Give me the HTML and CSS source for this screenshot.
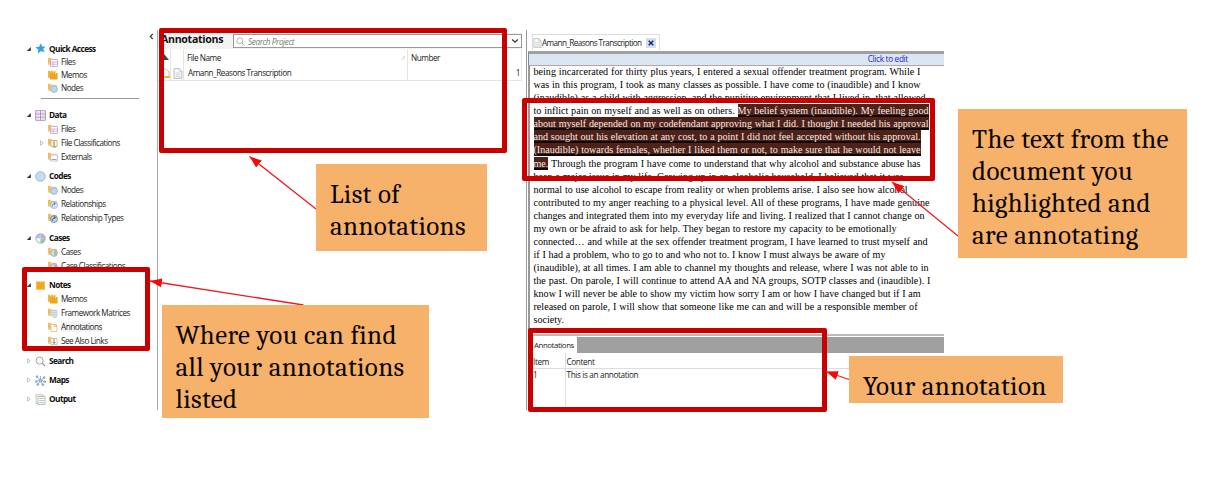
FILE: index.html
```html
<!DOCTYPE html>
<html lang="en">
<head>
<meta charset="utf-8">
<title>Annotations</title>
<link rel="stylesheet" href="styles.css">
</head>
<body>
<svg class="defs" width="0" height="0">
  <defs>
    <symbol id="folder" viewBox="0 0 10 10"><path d="M0 .8h3.2l.8.9h5V8H0z" fill="#f6d795"/><path d="M0 1h2.5v5.5H0z" fill="#efbd5d"/></symbol>
    <symbol id="star" viewBox="0 0 11 11"><path d="M5.8.3l1.5 3.2 3.4-.1-2.5 2.4 1.4 3.8-3.6-1.7-3.2 2.6.5-4L.4 4.3l3.8-.5z" fill="#34a3e6"/></symbol>
    <symbol id="files" viewBox="0 0 10 10"><use href="#folder"/><path d="M2.5 2.5h7v7h-7zM2.5 5h7M2.5 7.2h7M5 5v4.5" fill="#fff" stroke="#c5a3cf" stroke-width=".8"/></symbol>
    <symbol id="memos" viewBox="0 0 10 10"><path d="M0 .8h2v1h1v-1h2v1h1v-1h1.500V8H0z" fill="#efb642"/><path d="M2 3h1v1h1V3h1v1h1V3h1v1h1V3h1.500v6.500H2z" fill="#f0a31c"/></symbol>
    <symbol id="note" viewBox="0 0 11 11"><path d="M1.200 1.200h1.300v.8h1v-.8h1.300v.8h1v-.8h1.300v.8h1v-.8h1.700v8.500H1.200z" fill="#f3ab27"/><path d="M2 4.500h7M2 7h7" stroke="#e29a1d" stroke-width=".5"/></symbol>
    <symbol id="nodes" viewBox="0 0 10 10"><use href="#folder"/><circle cx="6" cy="6" r="3.400" fill="#bdd6ef" stroke="#87a9c9" stroke-width=".7"/></symbol>
    <symbol id="data" viewBox="0 0 11 11"><path d="M.7.700h9.600v9.600H.7zM.7 4h9.600M.7 7.200h9.600M5.500.700v9.600" fill="#fff" stroke="#a882b9" stroke-width=".9"/><path d="M2.500 2.400h1.300M7.200 2.400h1.300M2.500 5.600h1.300M7.200 5.600h1.300M2.500 8.800h1.300M7.200 8.800h1.300" stroke="#a882b9" stroke-width=".6"/></symbol>
    <symbol id="fileclass" viewBox="0 0 10 10"><use href="#folder"/><path d="M3 2.500h2.500v6H3zM6.500 2.500H9v6H6.500z" fill="#fffaf0" stroke="#c5a878" stroke-width=".8"/><path d="M5 9h3" stroke="#8b919b"/></symbol>
    <symbol id="externals" viewBox="0 0 10 10"><use href="#folder"/><path d="M2.500 3h7v6h-7z" fill="#fff" stroke="#c6b0bd" stroke-width=".8"/><path d="M3.500 7.500h5" stroke="#7f9bc0" stroke-width=".9"/></symbol>
    <symbol id="code" viewBox="0 0 11 11"><circle cx="5.500" cy="5.500" r="4.800" fill="#c7dcf2" stroke="#8aaac8" stroke-width=".8"/></symbol>
    <symbol id="rel" viewBox="0 0 10 10"><use href="#folder"/><circle cx="6" cy="6" r="3.500" fill="#d5e5f6" stroke="#7ba0d0" stroke-width=".6"/><path d="M4.500 7.500c0-2 1-3 2.500-3M5.800 3.500L7.500 4.500 6 5.800" fill="none" stroke="#3d72c0" stroke-width=".8"/></symbol>
    <symbol id="reltype" viewBox="0 0 10 10"><use href="#folder"/><circle cx="6" cy="6" r="3.500" fill="#bfd3e7" stroke="#56708d" stroke-width=".7"/><path d="M4.500 7.700c0-2 1-3 2.500-3M5.800 3.500L7.500 4.500 6 5.800" fill="none" stroke="#27486e" stroke-width=".9"/></symbol>
    <symbol id="casehead" viewBox="0 0 11 11"><path d="M5.500 5.500V.7A4.800 4.800 0 0 0 .7 5.500z" fill="#a9cbea"/><path d="M5.500 5.500V.7A4.800 4.800 0 0 1 10.300 5.500z" fill="#cfa6d8"/><path d="M5.500 5.500H.7A4.800 4.800 0 0 0 5.500 10.300z" fill="#f1f3f5"/><path d="M5.500 5.500h4.800A4.800 4.800 0 0 1 5.500 10.300z" fill="#86d28c"/><circle cx="5.500" cy="5.500" r="4.700" fill="none" stroke="#8e9aa9" stroke-width=".7"/></symbol>
    <symbol id="cases" viewBox="0 0 10 10"><use href="#folder"/><circle cx="6" cy="6" r="3.400" fill="#d4dfe9" stroke="#8598a8" stroke-width=".7"/><path d="M6 6h3a3 3 0 0 1-3 3z" fill="#8fd093"/><path d="M6 6V3a3 3 0 0 1 3 3z" fill="#c8a8d2"/></symbol>
    <symbol id="matrix" viewBox="0 0 10 10"><use href="#folder"/><path d="M3 2.500h6v5.500H3zM3 4.300h6M3 6.200h6M5 2.500V8M7 2.500V8" fill="#fff" stroke="#aebdce" stroke-width=".7"/><path d="M5 9.200h4" stroke="#b9c6d6"/></symbol>
    <symbol id="annot" viewBox="0 0 10 10"><use href="#folder"/><path d="M3 2.500h4l2 2V9.500H3z" fill="#fff" stroke="#d8b57c" stroke-width=".7"/><path d="M6.500 2.500v2H9" fill="none" stroke="#d8a94e" stroke-width=".7"/></symbol>
    <symbol id="links" viewBox="0 0 10 10"><use href="#folder"/><path d="M3 2.500h2.500v6H3zM6.500 2.500H9v6H6.500z" fill="#fff" stroke="#b6b3a4" stroke-width=".7"/><path d="M4.500 6.500h3" stroke="#75a2b3"/></symbol>
    <symbol id="search" viewBox="0 0 11 11"><circle cx="4.600" cy="4.600" r="3.600" fill="#fafcfe" stroke="#8b8f96" stroke-width=".8"/><path d="M7.200 7.200l3 3" stroke="#8b8f96" stroke-width="1.100"/></symbol>
    <symbol id="maps" viewBox="0 0 11 11"><path d="M5.500 5.500L2 1.500M5.500 5.500l3.800-3M5.500 5.500L1 6.500M5.500 5.500l4.200 1M5.500 5.500L2.800 9.700M5.500 5.500L7.800 10M5.500 5.500V1" stroke="#8594aa" stroke-width=".7"/><g fill="#a9c8e8" stroke="#64819f" stroke-width=".5"><circle cx="2" cy="1.700" r="1"/><circle cx="9.200" cy="2.500" r="1"/><circle cx="1.200" cy="6.500" r="1"/><circle cx="9.700" cy="6.700" r="1"/><circle cx="2.800" cy="9.500" r="1"/><circle cx="7.800" cy="9.700" r="1"/><circle cx="5.500" cy="5.500" r="1.500"/></g></symbol>
    <symbol id="output" viewBox="0 0 11 11"><path d="M1 .800h7v8.500H1z" fill="#fff" stroke="#a6aaa8" stroke-width=".7"/><path d="M3 2.500h7v8H3z" fill="#fff" stroke="#999f9c" stroke-width=".7"/><path d="M4.300 4.500h4.500M4.300 6.500h4.500M4.300 8.500h4.500" stroke="#92b5a1" stroke-width=".7"/></symbol>
    <symbol id="page" viewBox="0 0 10 11"><path d="M1 .6h5.300L9 3.300v7.100H1z" fill="#f7f9f9" stroke="#a5a9ab" stroke-width=".7"/><path d="M6.200.600v2.800H9M2.500 5h5M2.500 6.800h5M2.500 8.600h5" fill="none" stroke="#b9bdbf" stroke-width=".6"/></symbol>
    <symbol id="open" viewBox="0 0 6 6"><path d="M4.800 1v4H.8z" fill="#333"/></symbol>
    <symbol id="shut" viewBox="0 0 6 6"><path d="M1.500.800L4.300 3 1.500 5.200z" fill="#fff" stroke="#aaa" stroke-width=".7"/></symbol>
  </defs>
</svg>

<main class="stage">
  <div class="app">
    <nav class="sidebar">
      <span class="collapse"><svg viewBox="0 0 5 7"><path d="M3.700 1L1.300 3.500l2.400 2.500" fill="none" stroke="#333" stroke-width="1.100"/></svg></span>
      <section class="group quick">
        <h2><svg class="tri"><use href="#open"/></svg><svg class="hi"><use href="#star"/></svg><span>Quick Access</span></h2>
        <p><svg><use href="#files"/></svg><span>Files</span></p>
        <p><svg><use href="#memos"/></svg><span>Memos</span></p>
        <p><svg><use href="#nodes"/></svg><span>Nodes</span></p>
      </section>
      <hr>
      <section class="group">
        <h2><svg class="tri"><use href="#open"/></svg><svg class="hi"><use href="#data"/></svg><span>Data</span></h2>
        <p><svg><use href="#files"/></svg><span>Files</span></p>
        <p class="nested"><svg class="tri"><use href="#shut"/></svg><svg><use href="#fileclass"/></svg><span>File Classifications</span></p>
        <p><svg><use href="#externals"/></svg><span>Externals</span></p>
      </section>
      <section class="group codes">
        <h2><svg class="tri"><use href="#open"/></svg><svg class="hi"><use href="#code"/></svg><span>Codes</span></h2>
        <p><svg><use href="#nodes"/></svg><span>Nodes</span></p>
        <p><svg><use href="#rel"/></svg><span>Relationships</span></p>
        <p><svg><use href="#reltype"/></svg><span>Relationship Types</span></p>
      </section>
      <section class="group cases">
        <h2><svg class="tri"><use href="#open"/></svg><svg class="hi"><use href="#casehead"/></svg><span>Cases</span></h2>
        <p><svg><use href="#cases"/></svg><span>Cases</span></p>
        <p><svg><use href="#cases"/></svg><span>Case Classifications</span></p>
      </section>
      <section class="group notes">
        <h2><svg class="tri"><use href="#open"/></svg><svg class="hi"><use href="#note"/></svg><span>Notes</span></h2>
        <p><svg><use href="#memos"/></svg><span>Memos</span></p>
        <p><svg><use href="#matrix"/></svg><span>Framework Matrices</span></p>
        <p class="current"><svg><use href="#annot"/></svg><span>Annotations</span></p>
        <p><svg><use href="#links"/></svg><span>See Also Links</span></p>
      </section>
      <section class="group closed">
        <h2><svg class="tri"><use href="#shut"/></svg><svg class="hi"><use href="#search"/></svg><span>Search</span></h2>
        <h2><svg class="tri"><use href="#shut"/></svg><svg class="hi"><use href="#maps"/></svg><span>Maps</span></h2>
        <h2><svg class="tri"><use href="#shut"/></svg><svg class="hi"><use href="#output"/></svg><span>Output</span></h2>
      </section>
    </nav>

    <section class="list">
      <header class="list-head">
        <h1>Annotations</h1>
        <div class="searchbox">
          <svg class="glass"><use href="#search"/></svg><em>Search Project</em>
          <svg class="caret" viewBox="0 0 8 6"><path d="M1.200 1.500L4 4.200l2.800-2.700" fill="none" stroke="#333" stroke-width="1.200"/></svg>
        </div>
      </header>
      <div class="grid">
        <div class="cell"><svg class="pin" viewBox="0 0 8 8"><path d="M3 0l5 6H0z" fill="#444"/></svg></div><div class="cell"></div>
        <div class="cell name">File Name<i>/</i></div><div class="cell num">Number</div>
        <div class="cell"><svg class="mark" viewBox="0 0 8 10"><path d="M0 1h4l3 3v5H0z" fill="#fff" stroke="#c4a58b" stroke-width=".7"/><path d="M0 8h8v2H0z" fill="#f3b145"/></svg></div>
        <div class="cell"><svg class="doc"><use href="#page"/></svg></div>
        <div class="cell name row">Amann_Reasons Transcription</div><div class="cell num end">1</div>
      </div>
    </section>

    <section class="detail">
      <div class="tabs"><div class="tab"><svg><use href="#page"/></svg><span>Amann_Reasons Transcription</span><b><svg viewBox="0 0 10 10"><path d="M2.700 2.700l4.600 4.600M7.300 2.700L2.700 7.300" stroke="#1d2b66" stroke-width="1.500"/></svg></b></div></div>
      <div class="editbar"><span>Click to edit</span></div>
      <article class="doc-text">
        <p>being incarcerated for thirty plus years, I entered a sexual offender treatment program. While I</p>
        <p>was in this program, I took as many classes as possible. I have come to (inaudible) and I know</p>
        <p>(inaudible) as a child with aggression, and the punitive environment that I lived in, that allowed</p>
        <p>to inflict pain on myself and as well as on others. <mark>My belief system (inaudible). My feeling good</mark></p>
        <p><mark>about myself depended on my codefendant approving what I did. I thought I needed his approval</mark></p>
        <p><mark>and sought out his elevation at any cost, to a point I did not feel accepted without his approval.</mark></p>
        <p><mark>(Inaudible) towards females, whether I liked them or not, to make sure that he would not leave</mark></p>
        <p><mark>me.</mark> Through the program I have come to understand that why alcohol and substance abuse has</p>
        <p>been a major issue in my life. Growing up in an alcoholic household, I believed that it was</p>
        <p>normal to use alcohol to escape from reality or when problems arise. I also see how alcohol</p>
        <p>contributed to my anger reaching to a physical level. All of these programs, I have made genuine</p>
        <p>changes and integrated them into my everyday life and living. I realized that I cannot change on</p>
        <p>my own or be afraid to ask for help. They began to restore my capacity to be emotionally</p>
        <p>connected… and while at the sex offender treatment program, I have learned to trust myself and</p>
        <p>if I had a problem, who to go to and who not to. I know I must always be aware of my</p>
        <p>(inaudible), at all times. I am able to channel my thoughts and release, where I was not able to in</p>
        <p>the past. On parole, I will continue to attend AA and NA groups, SOTP classes and (inaudible). I</p>
        <p>know I will never be able to show my victim how sorry I am or how I have changed but if I am</p>
        <p>released on parole, I will show that someone like me can and will be a responsible member of</p>
        <p>society.</p>
      </article>
      <div class="notes-pane">
        <div class="notes-tabs"><span>Annotations</span></div>
        <div class="notes-grid">
          <div class="h">Item</div><div class="h c">Content</div>
          <div>1</div><div class="c">This is an annotation</div>
        </div>
      </div>
    </section>
  </div>

  <div class="frame f-list"></div>
  <div class="frame f-text"></div>
  <div class="frame f-notes"></div>
  <div class="frame f-pane"></div>

  <svg class="arrows" viewBox="0 0 1226 490">
    <defs><marker id="head" viewBox="0 0 12 9" markerWidth="12" markerHeight="9" refX="12" refY="4.500" orient="auto" markerUnits="userSpaceOnUse"><path d="M12 4.500L0 0v9z" fill="#fb0508"/></marker></defs>
    <g stroke="#ee1c23" stroke-width="1.300">
      <path d="M316 209L249.500 156.500" marker-end="url(#head)"/>
      <path d="M303.500 305L150 281" marker-end="url(#head)"/>
      <path d="M958 236L892 182" marker-end="url(#head)"/>
      <path d="M849 379.500L826 371.500" marker-end="url(#head)"/>
    </g>
  </svg>

  <div class="callout c-list">List of<br>annotations</div>
  <div class="callout c-notes">Where you can find<br>all your annotations<br>listed</div>
  <div class="callout c-text">The text from the<br>document you<br>highlighted and<br>are annotating</div>
  <div class="callout c-pane">Your annotation</div>
</main>
</body>
</html>
```
FILE: styles.css
```css
* { box-sizing: border-box; }
body { margin: 0; background: #fff; color: #222; font-family: "Open Sans", "Noto Sans", sans-serif; font-size: 8.2px; }
h1, h2, p { margin: 0; }
.defs { position: absolute; }
.stage { position: relative; width: 1226px; height: 490px; overflow: hidden; }
.app { display: flex; height: 410px; padding-top: 30px; }

/* navigation */
.sidebar { width: 158px; border-right: 1px solid #aaa; position: relative; padding-top: 12px; letter-spacing: -.5px; white-space: nowrap; }
.collapse { position: absolute; left: 149px; top: 3px; width: 5px; height: 7px; }
.collapse svg { display: block; width: 5px; height: 7px; }
.group h2 { display: flex; align-items: center; height: 14px; padding-left: 26px; font-size: 8.3px; font-weight: 700; letter-spacing: -.58px; color: #111; }
.group p { display: flex; align-items: center; height: 14px; padding-left: 48px; }
.group h2 span, .group p span { position: relative; top: -.5px; }
.group svg { width: 10px; height: 10px; flex: none; margin-right: 3px; }
.group svg.hi { width: 11px; height: 11px; }
.group svg.tri { width: 6px; height: 6px; margin-right: 3px; }
.group p.nested { padding-left: 39px; }
.quick h2, .quick p { height: 13px; }
.sidebar hr { width: 98px; height: 1px; border: 0; background: #999; margin: 4px 0 9px 41px; }
.codes, .notes { margin-top: 5px; }
.cases { margin-top: 6px; }
.current span { background: #f5f5f7; }
.closed { margin-top: 6px; display: grid; gap: 5px; }

/* annotation list */
.list { width: 369px; border-right: 1px solid #999; padding: 3px 4px 0 0; letter-spacing: -.46px; }
.list-head { display: flex; height: 16px; background: #f3f3f3; padding: 1px 0 1px 3px; }
.list-head h1 { width: 72px; font-size: 10.6px; line-height: 11px; letter-spacing: -.3px; color: #111; }
.searchbox { flex: 1; display: flex; align-items: center; background: #fff; border: 1px solid #999; color: #777; padding: 0 2px; }
.searchbox em { letter-spacing: -.4px; line-height: 11px; }
.searchbox .glass { width: 9px; height: 9px; margin-right: 3px; }
.searchbox .caret { width: 8px; height: 6px; margin-left: auto; }
.grid { display: grid; grid-template-columns: 13px 13px 224px 1fr; grid-template-rows: 17px 15px; }
.cell { display: flex; align-items: center; line-height: 12px; border-right: 1px solid #e4e4e4; }
.cell:nth-child(n+5) { border-bottom: 1px solid #e4e4e4; }
.name { justify-content: space-between; padding: 0 3px; }
.name.row { padding-left: 4px; }
.name i { color: #999; font-size: 6px; }
.num { padding-left: 3px; }
.num.end { justify-content: flex-end; padding-right: 1px; }
.pin { width: 8px; height: 8px; margin-left: 3px; }
.mark { width: 8px; height: 10px; margin-left: 4px; }
.doc { width: 10px; height: 11px; margin-left: 2px; }

/* document */
.detail { width: 417px; padding-left: 1px; }
.tabs { height: 21px; padding: 4px 0 0 4px; }
.tab { display: flex; align-items: center; width: 128px; height: 16px; border: 1px solid #ddd; border-bottom: 0; letter-spacing: -.6px; white-space: nowrap; }
.tab > svg { width: 9px; height: 10px; flex: none; }
.tab > span { line-height: 12px; }
.tab b { width: 10px; height: 10px; margin-left: auto; margin-right: 3px; background: #d5deec; }
.tab b svg { display: block; width: 10px; height: 10px; }
.editbar { height: 15px; background: #dce6f3; border-top: 3px solid #a0a0a0; border-bottom: 1px solid #aaa; border-left: 1px solid #888; text-align: right; padding-right: 36px; font-size: 8.2px; line-height: 10px; color: #2222d8; letter-spacing: -.3px; }
.doc-text { height: 269px; border-left: 2px solid #999; padding: 0 0 0 3.5px; margin-top: -1px; font: 10.1px/13.08px "Liberation Serif", serif; color: #000; }
.doc-text p { height: 13.08px; width: 387px; white-space: nowrap; text-align: justify; text-align-last: justify; }
.doc-text p:nth-child(3) { width: 392px; }
.doc-text p:nth-child(4), .doc-text p:nth-child(5) { width: 395px; }
.doc-text p:nth-child(9) { width: 370px; }
.doc-text p:nth-child(10) { width: 374px; }
.doc-text p:nth-child(11) { width: 396px; }
.doc-text p:nth-child(12) { width: 391px; }
.doc-text p:nth-child(13) { width: 363px; }
.doc-text p:nth-child(14) { width: 394px; }
.doc-text p:nth-child(15) { width: 352px; }
.doc-text p:nth-child(16) { width: 395px; }
.doc-text p:nth-child(17) { width: 397px; }
.doc-text p:nth-child(19) { width: 384px; }
.doc-text p:nth-child(20) { width: 31px; }
mark { color: #f6e9e4; background: linear-gradient(#4e2218 82%, #120604 82%); padding: 1px 0; }

.notes-pane { border-top: 2px solid #bbb; margin-left: 4px; }
.notes-tabs { margin-top: 1px; height: 16px; background: #a0a0a0; }
.notes-tabs span { display: block; width: 45px; height: 16px; background: #fff; padding-left: 2px; line-height: 17px; font-size: 7.8px; letter-spacing: -.4px; }
.notes-grid { display: grid; grid-template-columns: 33px 1fr; grid-template-rows: 16px 12px; height: 53px; line-height: 11px; letter-spacing: -.36px; background: linear-gradient(90deg, transparent 33px, #ddd 33px, #ddd 34px, transparent 34px); }
.notes-grid div { padding-left: 1px; }
.notes-grid .h { border-bottom: 1px solid #ddd; line-height: 18px; }
.notes-grid .c { padding-left: 1.5px; }

/* overlays */
.frame { position: absolute; border: 5px solid #c80000; border-radius: 2px; }
.f-list { left: 159px; top: 28px; width: 348px; height: 125px; }
.f-text { left: 522px; top: 98px; width: 413px; height: 83px; }
.f-notes { left: 22px; top: 267px; width: 128px; height: 84px; }
.f-pane { left: 528px; top: 328px; width: 299px; height: 84px; }
.arrows { position: absolute; left: 0; top: 0; width: 1226px; height: 490px; }
.callout { position: absolute; background: #f6b26b; color: #0c0703; font: 27px/32px Cambria, Caladea, "Noto Serif", "Liberation Serif", serif; letter-spacing: .34px; padding: 15px 14px 0; white-space: nowrap; }
.c-list { left: 316px; top: 164px; width: 171px; height: 87px; }
.c-notes { left: 162px; top: 305px; width: 267px; height: 113px; padding-left: 13.5px; }
.c-text { left: 958px; top: 109px; width: 229px; height: 149px; }
.c-pane { left: 849px; top: 356px; width: 214px; height: 47px; }
```
